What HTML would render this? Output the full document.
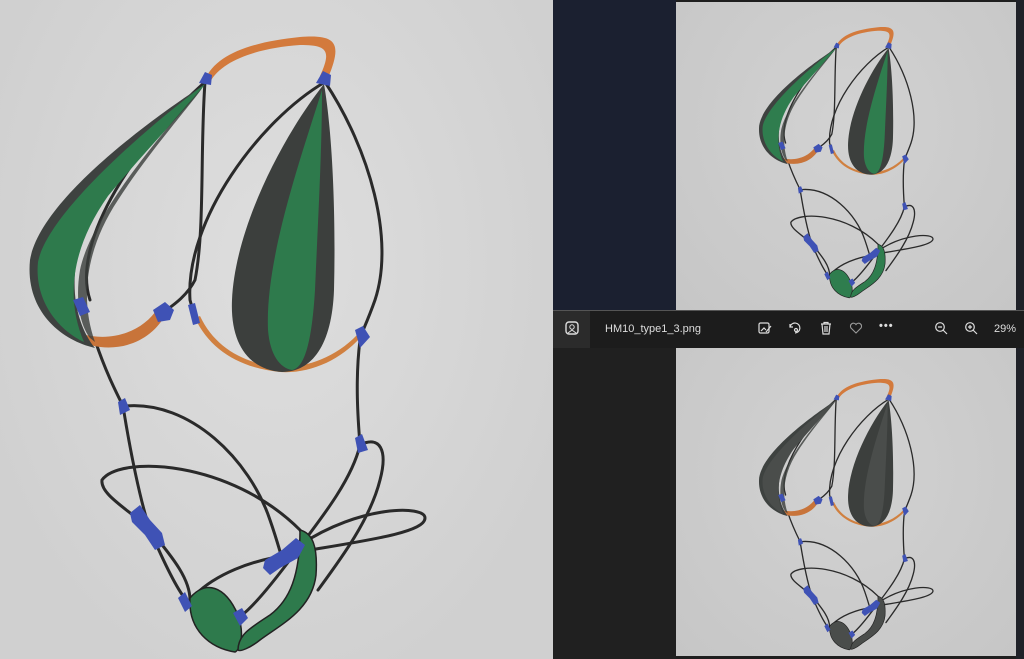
<!DOCTYPE html>
<html><head><meta charset="utf-8"><style>
html,body{margin:0;padding:0;width:1024px;height:659px;overflow:hidden;background:#1e1e1e;font-family:"Liberation Sans",sans-serif}
#left{position:absolute;left:0;top:0;width:553px;height:659px;background:radial-gradient(ellipse at 50% 40%,#dedede,#d0d0d0 80%)}
#navy{position:absolute;left:553px;top:0;width:123px;height:310px;background:#1b2030}
#t1{position:absolute;left:676px;top:2px;width:340px;height:308px;background:radial-gradient(ellipse at 50% 40%,#d2d2d2,#c6c6c6)}
#rstrip{position:absolute;left:1016px;top:0;width:8px;height:659px;background:#1f2128}
#tb{position:absolute;left:553px;top:310px;width:471px;height:37px;background:#1c1c1c;border-top:1px solid #555;color:#ddd;font-size:11px}
#bl{position:absolute;left:553px;top:347px;width:123px;height:312px;background:#202020}
#t2{position:absolute;left:676px;top:347px;width:340px;height:309px;background:radial-gradient(ellipse at 50% 40%,#d2d2d2,#c6c6c6)}
.ic{position:absolute;top:10px}
svg.f{position:absolute;left:0;top:0}
</style></head><body>
<div id="left"></div><div id="navy"></div><div id="t1"></div><div id="rstrip"></div><div id="bl"></div><div id="t2"></div>
<div id="tb">
 <div style="position:absolute;left:0;top:0;width:37px;height:37px;background:#2b2b2b"></div>
 <svg class="ic" style="left:12px" width="14" height="14" viewBox="0 0 14 14"><rect x="1" y="1" width="12" height="12" rx="3" fill="none" stroke="#ddd" stroke-width="1.4"/><circle cx="7" cy="6" r="2.2" fill="none" stroke="#ddd"/><path d="M3 12 L7 9 L11 12" fill="none" stroke="#ddd"/></svg>
 <div style="position:absolute;left:52px;top:12px">HM10_type1_3.png</div>
 <svg class="ic" style="left:205px" width="14" height="14" viewBox="0 0 14 14" fill="none" stroke="#ddd" stroke-width="1.2"><rect x="1" y="2" width="10" height="10" rx="1.5"/><path d="M3 10 L6 7 L8 9 M8 11 L13 5"/></svg>
 <svg class="ic" style="left:235px" width="14" height="14" viewBox="0 0 14 14" fill="none" stroke="#ddd" stroke-width="1.2"><path d="M2 6 A5 5 0 1 1 7 12"/><path d="M2 3 L2 6 L5 6"/><circle cx="8" cy="9" r="1.5"/></svg>
 <svg class="ic" style="left:266px" width="14" height="14" viewBox="0 0 14 14" fill="none" stroke="#ddd" stroke-width="1.2"><path d="M2 3 H12 M5 3 V1.5 H9 V3 M3 3 L4 13 H10 L11 3 M6 5 V11 M8 5 V11"/></svg>
 <svg class="ic" style="left:296px" width="14" height="14" viewBox="0 0 14 14" fill="none" stroke="#999" stroke-width="1.1"><path d="M7 12 L2 7 A2.7 2.7 0 0 1 7 3.5 A2.7 2.7 0 0 1 12 7 Z"/></svg>
 <div style="position:absolute;left:326px;top:9px;letter-spacing:1px;font-weight:bold">•••</div>
 <svg class="ic" style="left:381px" width="14" height="14" viewBox="0 0 14 14" fill="none" stroke="#ddd" stroke-width="1.2"><circle cx="6" cy="6" r="4.3"/><path d="M9 9 L13 13 M4 6 H8"/></svg>
 <svg class="ic" style="left:411px" width="14" height="14" viewBox="0 0 14 14" fill="none" stroke="#ddd" stroke-width="1.2"><circle cx="6" cy="6" r="4.3"/><path d="M9 9 L13 13 M4 6 H8 M6 4 V8"/></svg>
 <div style="position:absolute;left:441px;top:12px">29%</div>
</div>
<svg class="f" width="1024" height="659" viewBox="0 0 1024 659">
<defs>
<symbol id="fig" overflow="visible">
 <g fill="none" stroke="#2a2a2a" stroke-width="3" stroke-linecap="round">
  <path d="M205 82 C200 150 205 230 195 280 C185 300 165 310 160 315"/>
  <path d="M205 82 C140 140 70 240 90 300"/>
  <path d="M325 82 C260 120 185 220 190 300 L195 318"/>
  <path d="M325 82 C370 150 395 240 375 300 C368 320 362 332 360 338"/>
  <path d="M95 340 C105 370 115 390 123 406 C130 450 140 500 150 530 C165 565 178 590 186 600"/>
  <path d="M360 340 C355 380 358 420 360 445 C352 480 320 520 295 553 C275 580 255 605 242 615"/>
  <path d="M125 406 C190 400 250 460 270 520 C277 540 280 552 282 558"/>
  <path d="M150 530 C130 510 100 495 102 480 C120 455 230 460 300 530 C310 545 310 560 290 600"/>
  <path d="M300 545 C360 505 425 505 425 518 C425 532 370 540 310 550"/>
  <path d="M360 445 C380 435 388 450 380 480 C370 520 340 560 318 590"/>
  <path d="M150 530 C175 560 190 580 190 600 M290 555 C250 560 215 575 195 595"/>
 </g>
 <path d="M205 80 C215 55 250 42 300 37 C338 34 342 44 328 78 L320 76 C332 50 327 45 300 45 C258 48 222 60 210 82 Z" fill="#d37a3c"/>
 <path d="M76 340 C110 356 150 346 167 312 L158 308 C142 333 110 342 82 334 Z" fill="#c8743a"/>
 <path d="M195 318 C210 350 240 368 280 372 C310 374 340 360 360 338 L357 335 C335 358 305 368 280 367 C245 364 215 348 200 316 Z" fill="#d08040"/>
 <path d="M205 84 C150 120 40 200 30 260 C25 310 60 340 95 348 C72 320 62 262 100 200 C140 150 190 100 205 84 Z" fill="#3e4240"/>
 <path d="M205 84 C150 125 48 212 38 262 C34 300 58 330 84 342 C66 300 70 250 108 196 C150 145 195 100 205 84 Z" fill="currentColor"/>
 <path d="M202 88 C155 140 90 220 80 270 C75 300 80 325 90 338 L95 342 C80 300 85 250 118 200 C150 150 195 100 202 88 Z" fill="#3a3d3b" opacity=".8"/>
 <path d="M324 84 C280 140 235 230 232 300 C230 345 250 370 282 372 C312 372 332 345 334 290 C336 210 332 130 324 84 Z" fill="#3c3f3d"/>
 <path d="M322 90 C300 160 265 260 268 330 C270 355 280 368 292 370 C305 368 312 340 315 290 C318 220 322 150 322 90 Z" fill="currentColor"/>
 <path d="M190 598 C205 580 225 585 238 615 C245 635 240 650 235 652 C210 648 188 630 190 598 Z" fill="currentColor" stroke="#222" stroke-width="1.5"/>
 <path d="M300 530 C312 533 318 545 316 575 C312 610 280 625 260 640 C250 648 240 652 238 650 C238 635 250 628 270 615 C290 600 300 575 300 530 Z" fill="currentColor" stroke="#222" stroke-width="1.5"/>
 <g fill="#3f52b5">
  <path d="M199 83 L205 72 L212 75 L211 85 Z"/><path d="M316 83 L323 71 L331 75 L330 86 Z"/>
  <path d="M73 300 L83 297 L90 312 L80 316 Z"/><path d="M153 310 L165 302 L174 310 L170 320 L158 322 Z"/>
  <path d="M188 305 L195 303 L200 323 L193 325 Z"/><path d="M355 330 L363 326 L370 337 L360 348 Z"/>
  <path d="M118 402 L125 398 L130 410 L120 415 Z"/><path d="M355 438 L362 434 L368 450 L358 453 Z"/>
  <path d="M130 513 L140 505 L150 520 L162 533 L165 545 L155 550 L145 535 L132 522 Z"/>
  <path d="M265 560 L282 550 L296 538 L305 545 L298 558 L280 568 L270 575 L263 568 Z"/>
  <path d="M178 598 L185 592 L192 606 L185 612 Z"/><path d="M233 613 L242 608 L248 618 L240 626 Z"/>
 </g>
</symbol>
</defs>
<use href="#fig" color="#2e7a4c"/>
<g transform="translate(746 11) scale(0.44)"><use href="#fig" color="#2f7d4e"/></g>
<g transform="translate(746 363) scale(0.44)"><use href="#fig" color="#4a4d4b"/></g>
</svg>
</body></html>
